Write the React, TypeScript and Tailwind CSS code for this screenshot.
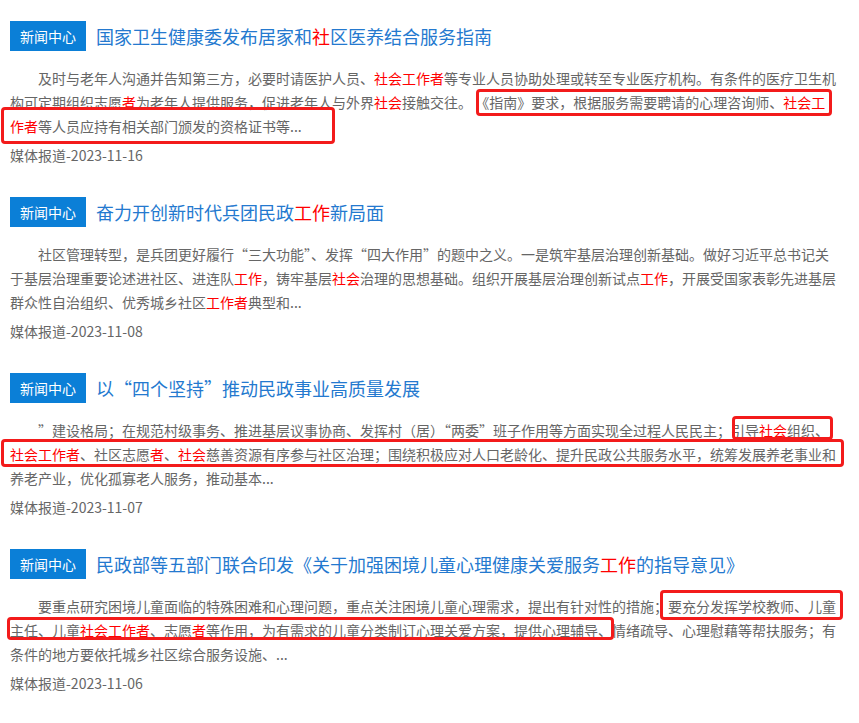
import React from "react";

type Seg = string | { r: string };

type Box = { left: number; top: number; w: number; h: number };

type Item = {
  title: Seg[];
  body: Seg[];
  date: string;
  boxes: Box[];
};

const items: Item[] = [
  {
    title: ["国家卫生健康委发布居家和", { r: "社" }, "区医养结合服务指南"],
    body: [
      "及时与老年人沟通并告知第三方，必要时请医护人员、",
      { r: "社会工作者" },
      "等专业人员协助处理或转至专业医疗机构。有条件的医疗卫生机构可定期组织志愿",
      { r: "者" },
      "为老年人提供服务，促进老年人与外界",
      { r: "社会" },
      "接触交往。 《指南》要求，根据服务需要聘请的心理咨询师、",
      { r: "社会工作者" },
      "等人员应持有相关部门颁发的资格证书等...",
    ],
    date: "媒体报道-2023-11-16",
    boxes: [
      { left: 476, top: 89, w: 356, h: 27 },
      { left: 1, top: 107, w: 334, h: 37 },
    ],
  },
  {
    title: ["奋力开创新时代兵团民政", { r: "工作" }, "新局面"],
    body: [
      "社区管理转型，是兵团更好履行“三大功能”、发挥“四大作用”的题中之义。一是筑牢基层治理创新基础。做好习近平总书记关于基层治理重要论述进社区、进连队",
      { r: "工作" },
      "，铸牢基层",
      { r: "社会" },
      "治理的思想基础。组织开展基层治理创新试点",
      { r: "工作" },
      "，开展受国家表彰先进基层群众性自治组织、优秀城乡社区",
      { r: "工作者" },
      "典型和...",
    ],
    date: "媒体报道-2023-11-08",
    boxes: [],
  },
  {
    title: ["以“四个坚持”推动民政事业高质量发展"],
    body: [
      "”建设格局；在规范村级事务、推进基层议事协商、发挥村（居）“两委”班子作用等方面实现全过程人民民主；引导",
      { r: "社会" },
      "组织、",
      { r: "社会工作者" },
      "、社区志愿",
      { r: "者" },
      "、",
      { r: "社会" },
      "慈善资源有序参与社区治理；围绕积极应对人口老龄化、提升民政公共服务水平，统筹发展养老事业和养老产业，优化孤寡老人服务，推动基本...",
    ],
    date: "媒体报道-2023-11-07",
    boxes: [
      { left: 732, top: 64, w: 101, h: 24 },
      { left: 1, top: 87, w: 843, h: 28 },
    ],
  },
  {
    title: [
      "民政部等五部门联合印发《关于加强困境儿童心理健康关爱服务",
      { r: "工作" },
      "的指导意见》",
    ],
    body: [
      "要重点研究困境儿童面临的特殊困难和心理问题，重点关注困境儿童心理需求，提出有针对性的措施；要充分发挥学校教师、儿童主任、儿童",
      { r: "社会工作者" },
      "、志愿",
      { r: "者" },
      "等作用，为有需求的儿童分类制订心理关爱方案，提供心理辅导、情绪疏导、心理慰藉等帮扶服务；有条件的地方要依托城乡社区综合服务设施、...",
    ],
    date: "媒体报道-2023-11-06",
    boxes: [
      { left: 660, top: 62, w: 183, h: 30 },
      { left: 7, top: 89, w: 607, h: 23 },
    ],
  },
];

function Segs({ segs }: { segs: Seg[] }) {
  return (
    <>
      {segs.map((s, i) =>
        typeof s === "string" ? (
          <span key={i}>{s}</span>
        ) : (
          <span key={i} className="text-[#ff0000]">
            {s.r}
          </span>
        )
      )}
    </>
  );
}

export default function App() {
  return (
    <div
      lang="zh-CN"
      className="w-[859px] h-[723px] overflow-hidden bg-white"
      style={{ fontFamily: '"Noto Sans CJK SC", "Noto Sans", sans-serif' }}
    >
      {items.map((it, idx) => (
        <section key={idx} className="relative h-[176px] pt-[21px] px-[10px]">
          <div className="flex items-center h-[30px]">
            <span className="flex items-center justify-center w-[76px] h-[30px] bg-[#0b7fd7] text-white text-[14px] leading-none shrink-0">
              新闻中心
            </span>
            <h2 className="ml-[10px] text-[18px] leading-[30px] text-[#2479cf] font-normal whitespace-nowrap">
              <Segs segs={it.title} />
            </h2>
          </div>
          <p className="mt-[15px] w-[827px] text-[14px] leading-[24px] text-[#666666] indent-[28px] break-all">
            <Segs segs={it.body} />
          </p>
          <div className="mt-[5px] text-[14px] leading-[24px] text-[#666666]">{it.date}</div>
          {it.boxes.map((b, i) => (
            <div
              key={i}
              className="absolute border-[3px] border-[#f31b1b] rounded-[4px] pointer-events-none"
              style={{ left: b.left, top: b.top, width: b.w, height: b.h }}
            />
          ))}
        </section>
      ))}
    </div>
  );
}
